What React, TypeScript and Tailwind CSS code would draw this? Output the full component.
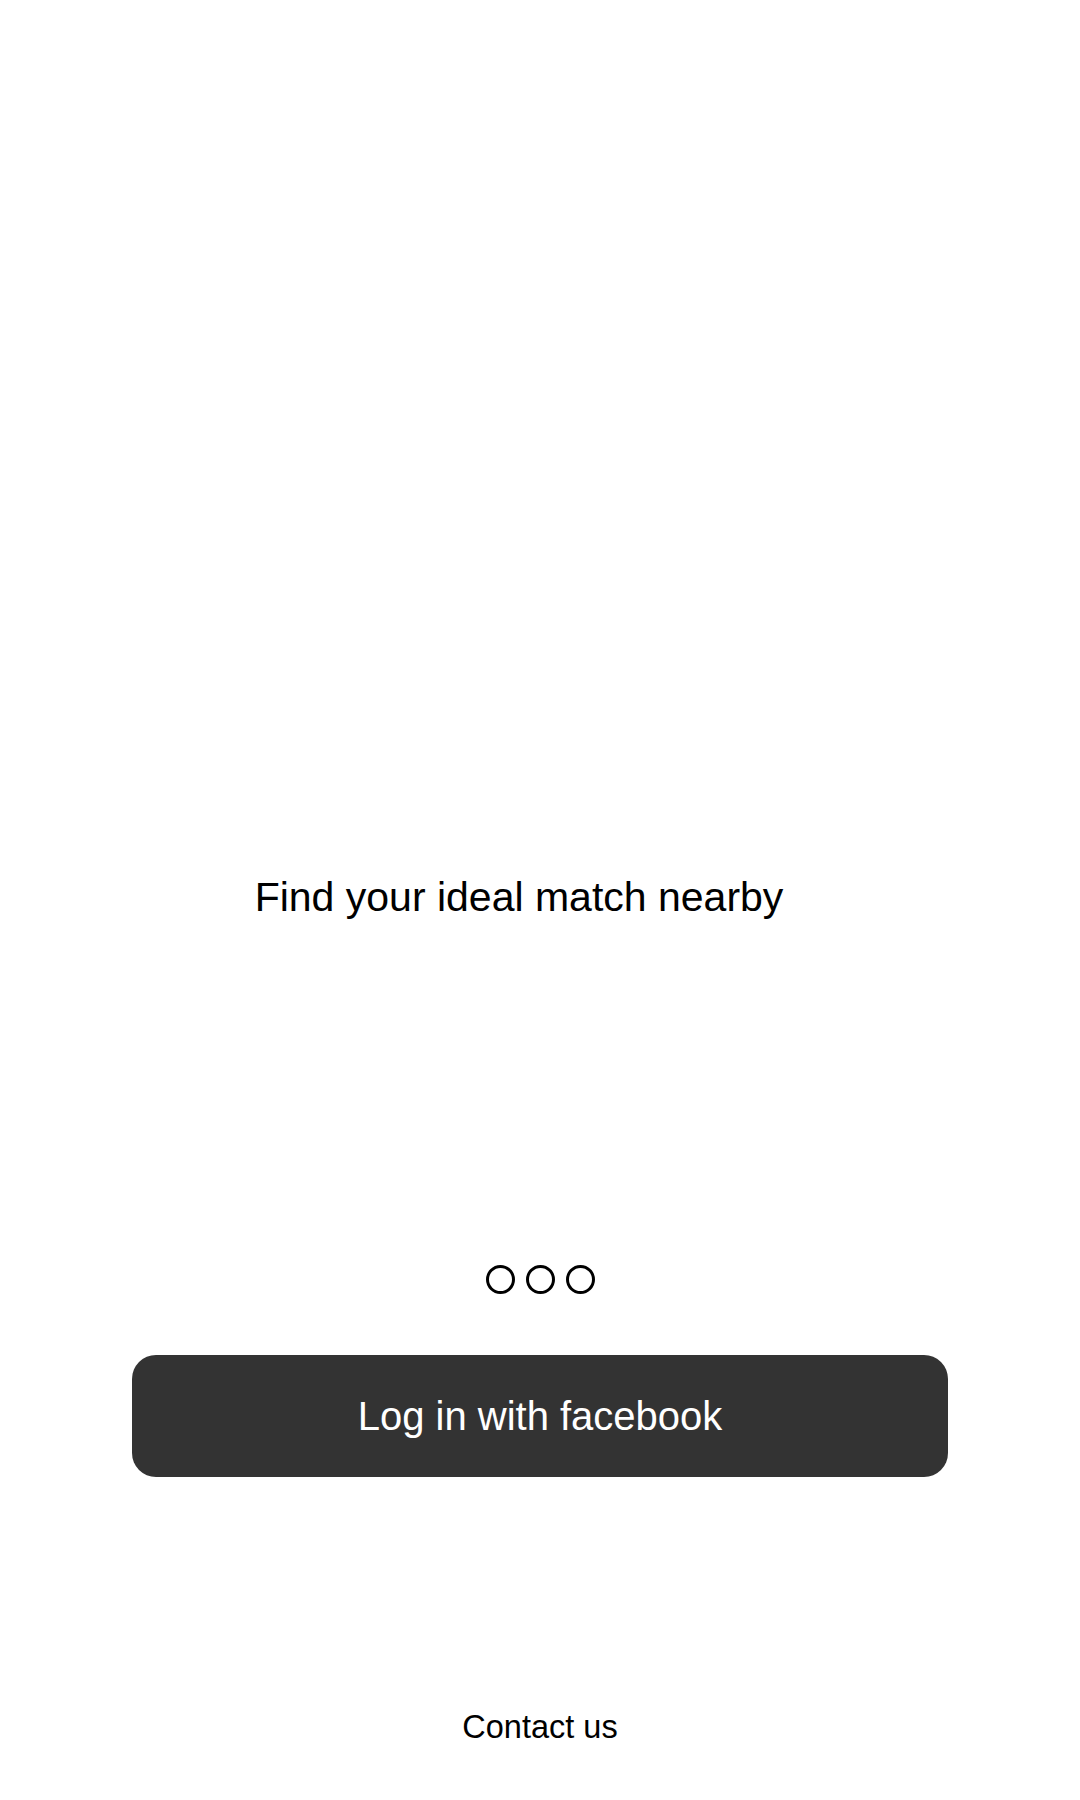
export default function App() {
  return (
    <div className="flex h-[1800px] w-full flex-col items-center bg-white font-['Liberation_Sans',Arial,sans-serif] text-black">
      <h1 className="mt-[877px] w-full pr-[42px] text-center text-[41px] leading-[41px] font-normal">
        Find your ideal match nearby
      </h1>

      <div className="mt-[347px] flex gap-[11px]">
        <span className="h-[29px] w-[29px] rounded-full border-[3px] border-black"></span>
        <span className="h-[29px] w-[29px] rounded-full border-[3px] border-black"></span>
        <span className="h-[29px] w-[29px] rounded-full border-[3px] border-black"></span>
      </div>

      <button className="mt-[61px] flex h-[122px] w-[816px] items-center justify-center rounded-[24px] bg-[#333333] text-[40px] leading-[40px] text-white">
        Log in with facebook
      </button>

      <a className="mt-[234px] text-[32.5px] leading-[32px] text-black">Contact us</a>
    </div>
  );
}
